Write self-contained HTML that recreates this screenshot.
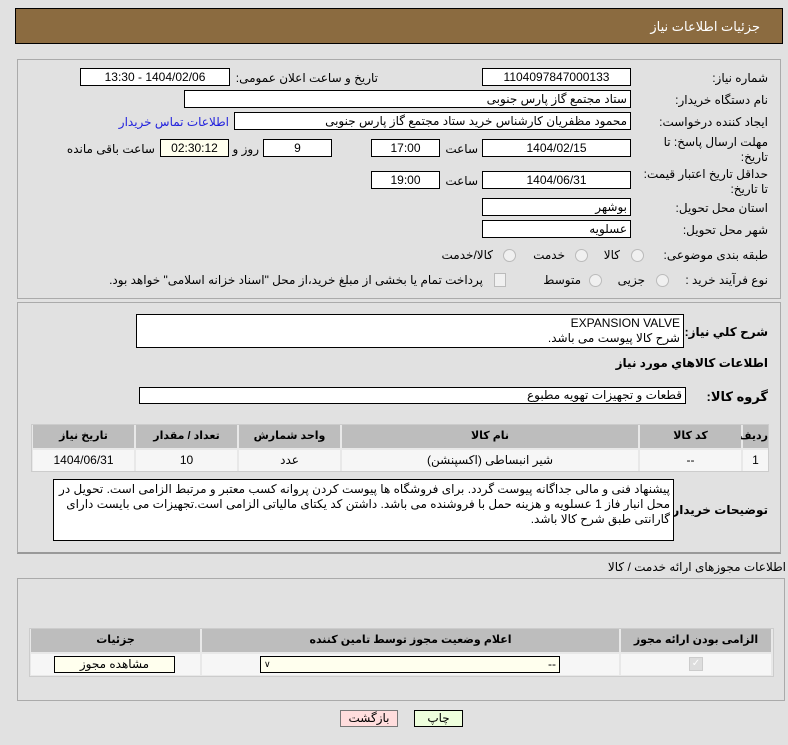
<!DOCTYPE html>
<html><head><meta charset="utf-8"><style>
body{margin:0;width:788px;height:745px;background:#e1e1e1;position:relative;overflow:hidden;font-family:"Liberation Sans","DejaVu Sans",sans-serif;font-size:12px;color:#000}
.a{position:absolute;white-space:nowrap}
.l{position:absolute;white-space:nowrap;direction:rtl;text-align:right;font-size:12px}
.b{position:absolute;background:#fff;border:1px solid #000;box-sizing:border-box;direction:rtl;padding:0 3px;font-size:12px;line-height:16px;white-space:nowrap;overflow:hidden}
.c{text-align:center}
.hd{position:absolute;background:#bdbdbd;font-weight:bold;text-align:center;font-size:11px;line-height:23px;direction:rtl}
.td{position:absolute;background:#f6f6f6;text-align:center;line-height:21px;font-size:12px;direction:rtl}
.rad{position:absolute;width:11px;height:11px;border-radius:50%;border:1px solid #bbb;background:#f0f0f0}
.pan{position:absolute;border:1px solid #aaa;box-sizing:border-box}
</style></head><body>
<div class="a" style="left:15px;top:8px;width:768px;height:36px;background:#8b6b40;border:1px solid #000;box-sizing:border-box"></div>
<div class="l" style="right:28px;top:19px;color:#fff;font-size:13px">جزئیات اطلاعات نیاز</div>

<div class="pan" style="left:17px;top:59px;width:764px;height:240px"></div>

<div class="l" style="right:20px;top:71px">شماره نیاز:</div>
<div class="b c" style="left:482px;top:68px;width:149px;height:18px">1104097847000133</div>
<div class="l" style="right:410px;top:71px">تاریخ و ساعت اعلان عمومی:</div>
<div class="b c" style="left:80px;top:68px;width:150px;height:18px">1404/02/06 - 13:30</div>

<div class="l" style="right:20px;top:93px">نام دستگاه خریدار:</div>
<div class="b" style="left:184px;top:90px;width:447px;height:18px">ستاد مجتمع گاز پارس جنوبی</div>

<div class="l" style="right:20px;top:115px">ایجاد کننده درخواست:</div>
<div class="b" style="left:234px;top:112px;width:397px;height:18px">محمود مظفریان کارشناس خرید ستاد مجتمع گاز پارس جنوبی</div>
<div class="l" style="right:559px;top:115px;color:#2222dd">اطلاعات تماس خریدار</div>

<div class="l" style="right:20px;top:135px;line-height:15px;width:125px;white-space:normal">مهلت ارسال پاسخ: تا تاریخ:</div>
<div class="b c" style="left:482px;top:139px;width:149px;height:18px">1404/02/15</div>
<div class="l" style="right:310px;top:142px">ساعت</div>
<div class="b c" style="left:371px;top:139px;width:69px;height:18px">17:00</div>
<div class="b c" style="left:263px;top:139px;width:69px;height:18px">9</div>
<div class="l" style="right:529px;top:142px">روز و</div>
<div class="b c" style="left:160px;top:139px;width:69px;height:18px;background:#ffffee">02:30:12</div>
<div class="l" style="right:633px;top:142px">ساعت باقی مانده</div>

<div class="l" style="right:20px;top:167px;line-height:15px;width:130px;white-space:normal">حداقل تاریخ اعتبار قیمت: تا تاریخ:</div>
<div class="b c" style="left:482px;top:171px;width:149px;height:18px">1404/06/31</div>
<div class="l" style="right:310px;top:174px">ساعت</div>
<div class="b c" style="left:371px;top:171px;width:69px;height:18px">19:00</div>

<div class="l" style="right:20px;top:201px">استان محل تحویل:</div>
<div class="b" style="left:482px;top:198px;width:149px;height:18px">بوشهر</div>
<div class="l" style="right:20px;top:223px">شهر محل تحویل:</div>
<div class="b" style="left:482px;top:220px;width:149px;height:18px">عسلویه</div>

<div class="l" style="right:20px;top:248px">طبقه بندی موضوعی:</div>
<div class="rad" style="left:631px;top:249px"></div><div class="l" style="right:168px;top:248px">کالا</div>
<div class="rad" style="left:575px;top:249px"></div><div class="l" style="right:223px;top:248px">خدمت</div>
<div class="rad" style="left:503px;top:249px"></div><div class="l" style="right:295px;top:248px">کالا/خدمت</div>

<div class="l" style="right:20px;top:273px">نوع فرآیند خرید :</div>
<div class="rad" style="left:656px;top:274px"></div><div class="l" style="right:143px;top:273px">جزیی</div>
<div class="rad" style="left:589px;top:274px"></div><div class="l" style="right:207px;top:273px">متوسط</div>
<div class="a" style="left:494px;top:273px;width:10px;height:12px;border:1px solid #bbb;background:#f0f0f0"></div>
<div class="l" style="right:305px;top:273px">پرداخت تمام یا بخشی از مبلغ خرید،از محل "اسناد خزانه اسلامی" خواهد بود.</div>

<div class="pan" style="left:17px;top:302px;width:764px;height:252px;border-bottom:2px solid #999"></div>

<div class="l" style="right:20px;top:325px;font-weight:bold;font-size:12px">شرح کلي نیاز:</div>
<div class="b" style="left:136px;top:314px;width:548px;height:34px;line-height:15px;padding-top:1px">EXPANSION VALVE<br>شرح کالا پیوست می باشد.</div>
<div class="l" style="right:20px;top:356px;font-weight:bold;font-size:12px">اطلاعات کالاهاي مورد نیاز</div>
<div class="l" style="right:20px;top:389px;font-weight:bold;font-size:13px">گروه کالا:</div>
<div class="b" style="left:139px;top:387px;width:547px;height:17px;line-height:15px">قطعات و تجهیزات تهویه مطبوع</div>

<div class="a" style="left:31px;top:424px;width:738px;height:48px;background:#e8e8e8;border:1px solid #ccc;box-sizing:border-box"></div>
<div class="hd" style="left:743px;top:425px;width:25px">ردیف</div>
<div class="hd" style="left:640px;top:425px;width:101px">کد کالا</div>
<div class="hd" style="left:342px;top:425px;width:296px">نام کالا</div>
<div class="hd" style="left:239px;top:425px;width:101px">واحد شمارش</div>
<div class="hd" style="left:136px;top:425px;width:101px">تعداد / مقدار</div>
<div class="hd" style="left:33px;top:425px;width:101px">تاریخ نیاز</div>
<div class="td" style="left:743px;top:450px;width:25px">1</div>
<div class="td" style="left:640px;top:450px;width:101px">--</div>
<div class="td" style="left:342px;top:450px;width:296px">شیر انبساطی (اکسپنشن)</div>
<div class="td" style="left:239px;top:450px;width:101px">عدد</div>
<div class="td" style="left:136px;top:450px;width:101px">10</div>
<div class="td" style="left:33px;top:450px;width:101px">1404/06/31</div>

<div class="l" style="right:20px;top:503px;font-weight:bold;font-size:12px">توضیحات خریدار:</div>
<div class="b" style="left:53px;top:479px;width:621px;height:62px;line-height:15px;white-space:normal;padding-top:2px">پیشنهاد فنی و مالی جداگانه پیوست گردد. برای فروشگاه ها پیوست کردن پروانه کسب معتبر و مرتبط الزامی است. تحویل در محل انبار فاز 1 عسلویه و هزینه حمل با فروشنده می باشد. داشتن کد یکتای مالیاتی الزامی است.تجهیزات می بایست دارای گارانتی طبق شرح کالا باشد.</div>

<div class="l" style="right:2px;top:560px">اطلاعات مجوزهای ارائه خدمت / کالا</div>
<div class="pan" style="left:17px;top:578px;width:768px;height:123px"></div>
<div class="a" style="left:29px;top:628px;width:745px;height:49px;background:#e8e8e8;border:1px solid #ccc;box-sizing:border-box"></div>
<div class="hd" style="left:621px;top:629px;width:150px">الزامی بودن ارائه مجوز</div>
<div class="hd" style="left:202px;top:629px;width:417px">اعلام وضعیت مجوز توسط تامین کننده</div>
<div class="hd" style="left:31px;top:629px;width:169px">جزئیات</div>
<div class="td" style="left:621px;top:654px;width:150px;height:21px"></div>
<div class="td" style="left:202px;top:654px;width:417px;height:21px"></div>
<div class="td" style="left:31px;top:654px;width:169px;height:21px"></div>
<div class="a" style="left:689px;top:657px;width:12px;height:12px;background:#ddd;border:1px solid #ccc;color:#fff;font-size:10px;line-height:12px;text-align:center">✓</div>
<div class="b" style="left:260px;top:656px;width:300px;height:17px;background:#ffffee;line-height:15px">--<span style="position:absolute;left:3px;top:0;font-size:9px">&#8744;</span></div>
<div class="b c" style="left:54px;top:656px;width:121px;height:17px;background:#ffffee;line-height:15px">مشاهده مجوز</div>

<div class="b c" style="left:414px;top:710px;width:49px;height:17px;background:#eeffdd;line-height:15px">چاپ</div>
<div class="b c" style="left:340px;top:710px;width:58px;height:17px;background:#ffdddd;line-height:15px;border-color:#777">بازگشت</div>
</body></html>
